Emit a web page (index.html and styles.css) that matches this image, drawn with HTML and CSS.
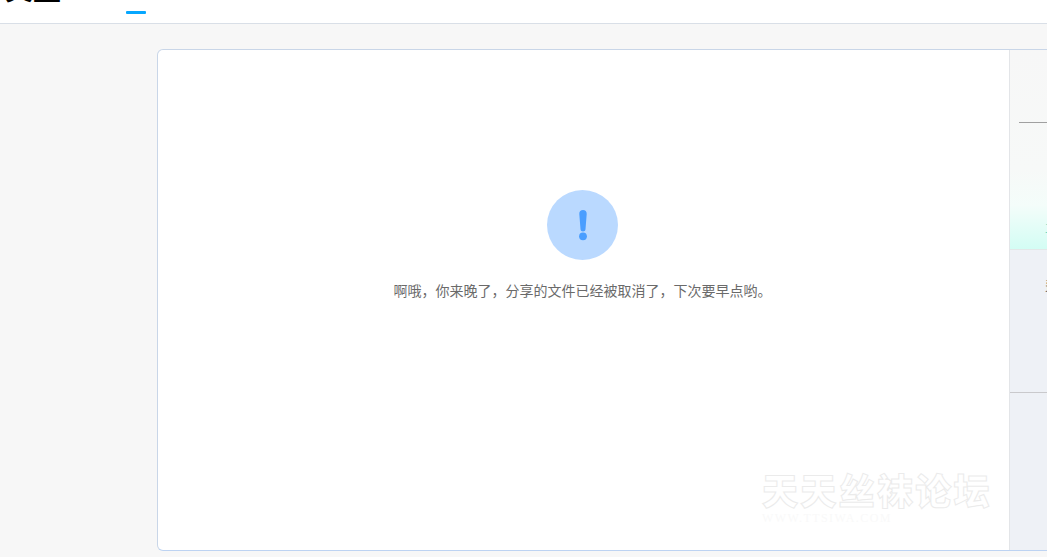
FILE: index.html
```html
<!DOCTYPE html>
<html lang="zh-CN">
<head>
<meta charset="utf-8">
<title>分享已取消</title>
<link rel="stylesheet" href="styles.css">
</head>
<body>
<header class="topbar">
  <div class="logo">文盘</div>
  <div class="tab-active"></div>
</header>
<main class="stage">
  <section class="card">
    <div class="content">
      <div class="notice">
        <div class="badge">
          <svg class="badge-icon" viewBox="0 0 12 32" width="12" height="32" aria-hidden="true">
            <path d="M6 1c2.200 0 3.900 1.700 3.700 3.900L8.500 20.200C8.400 21.500 7.300 22.500 6 22.500s-2.400-1-2.500-2.300L2.300 4.900C2.100 2.700 3.800 1 6 1z" fill="#4a9eff"/>
            <circle cx="6" cy="27.300" r="3.900" fill="#4a9eff"/>
          </svg>
        </div>
        <p class="message">啊哦，你来晚了，分享的文件已经被取消了，下次要早点哟。</p>
      </div>
      <div class="watermark">
        <div class="wm-title">天天丝袜论坛</div>
        <div class="wm-url">WWW.TTSIWA.COM</div>
      </div>
    </div>
    <aside class="side">
      <div class="side-top">
        <div class="side-rule"></div>
        <div class="side-mark">立</div>
      </div>
      <div class="side-mid"><span class="side-char">费</span></div>
      <div class="side-bottom"></div>
    </aside>
  </section>
</main>
</body>
</html>
```
FILE: styles.css
```css
* { box-sizing: border-box; }
html, body { margin: 0; height: 100%; }
body {
  width: 1047px;
  height: 557px;
  overflow: hidden;
  background: #f7f7f7;
  font-family: "Liberation Sans", "Noto Sans CJK SC", sans-serif;
  display: flex;
  flex-direction: column;
}
.topbar {
  height: 24px;
  flex: none;
  background: #fff;
  border-bottom: 1px solid #d9dfe7;
  display: flex;
  align-items: flex-start;
  overflow: hidden;
}
.logo {
  width: 126px;
  flex: none;
  margin-top: -26px;
  padding-left: 5px;
  font-family: "Noto Sans CJK SC", sans-serif;
  font-size: 28px;
  line-height: 28px;
  font-weight: 700;
  color: #000;
  white-space: nowrap;
}
.tab-active {
  margin-top: 11px;
  width: 20px;
  height: 3px;
  border-radius: 1px;
  background: #06a7ff;
}
.stage {
  flex: 1;
  min-height: 0;
  padding: 25px 0 6px 157px;
  overflow: hidden;
}
.card {
  width: 900px;
  height: 502px;
  display: flex;
  background: #fff;
  border: 1px solid #c9d6e8;
  border-bottom-color: #bdd3f2;
  border-radius: 6px;
}
.content {
  position: relative;
  width: 851px;
  flex: none;
  padding: 140px 2px 0 0;
}
.notice {
  display: flex;
  flex-direction: column;
  align-items: center;
}
.badge {
  width: 71px;
  height: 70px;
  border-radius: 50%;
  background: #bad9ff;
  display: flex;
  align-items: center;
  justify-content: center;
}
.badge-icon { display: block; }
.message {
  margin: 20px 0 0;
  font-size: 14px;
  line-height: 20px;
  color: #6a6a6a;
  font-family: "Noto Sans CJK SC", sans-serif;
  white-space: nowrap;
}
.watermark {
  position: absolute;
  left: 604px;
  top: 421px;
  pointer-events: none;
}
.wm-title {
  font-family: "Noto Sans CJK SC", sans-serif;
  font-size: 36px;
  line-height: 36px;
  font-weight: 900;
  letter-spacing: 2.300px;
  color: #fff;
  -webkit-text-stroke: 1px #ebebeb;
  white-space: nowrap;
}
.wm-url {
  margin-top: 6px;
  font-family: "Liberation Serif", serif;
  font-size: 12px;
  line-height: 10px;
  letter-spacing: 1.400px;
  color: #f9f9f9;
  white-space: nowrap;
}
.side {
  flex: 1;
  min-width: 0;
  display: flex;
  flex-direction: column;
  border-left: 1px solid #e3e5e8;
  overflow: hidden;
}
.side-top {
  height: 200px;
  flex: none;
  padding: 72px 0 0 9px;
  background: linear-gradient(180deg, #f7f7f7 0%, #f7f9f8 60%, #f4fdfa 78%, #d3fdf4 100%);
  border-bottom: 1px solid #e2e8e8;
  overflow: hidden;
}
.side-rule {
  width: 28px;
  height: 1px;
  background: #a0a0a0;
}
.side-mark {
  margin: 95px 0 0 26px;
  font-family: "Noto Sans CJK SC", sans-serif;
  font-size: 13px;
  line-height: 18px;
  color: #6fd6c4;
  white-space: nowrap;
}
.side-mid {
  height: 143px;
  flex: none;
  padding: 25px 0 0 35px;
  background: #eef1f6;
  border-bottom: 1px solid #c9c9cc;
  overflow: hidden;
}
.side-char {
  display: block;
  font-size: 13px;
  line-height: 20px;
  color: #666;
  font-family: "Noto Sans CJK SC", sans-serif;
  white-space: nowrap;
}
.side-bottom {
  flex: 1;
  background: #eef1f6;
}
```
